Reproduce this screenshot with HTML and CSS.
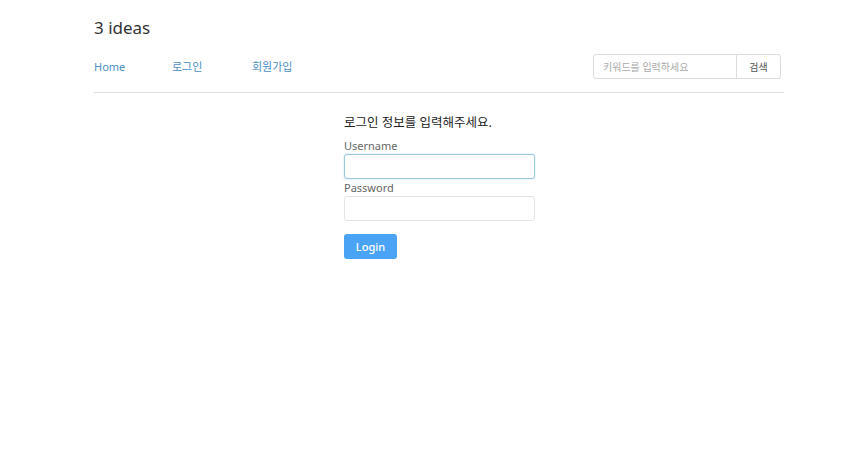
FILE: index.html
```html
<!DOCTYPE html>
<html lang="ko">
<head>
<meta charset="utf-8">
<link rel="stylesheet" href="styles.css">
</head>
<body>
<div class="container">
  <h1 class="brand">3 ideas</h1>
  <nav class="nav">
    <div class="links">
      <a href="#" class="link">Home</a>
      <a href="#" class="link">로그인</a>
      <a href="#" class="link">회원가입</a>
    </div>
    <form class="search">
      <input class="search-input" type="text" placeholder="키워드를 입력하세요">
      <button class="search-btn" type="button">검색</button>
    </form>
  </nav>
  <div class="rule"></div>
  <main class="login">
    <h2 class="login-title">로그인 정보를 입력해주세요.</h2>
    <label class="label first">Username</label>
    <input class="field focused" type="text">
    <label class="label">Password</label>
    <input class="field" type="password">
    <button class="login-btn" type="button">Login</button>
  </main>
</div>
</body>
</html>
```
FILE: styles.css
```css
* { box-sizing: border-box; }
html, body { margin: 0; padding: 0; background: #fff; }
body {
  font-family: "Noto Sans", "Noto Sans CJK KR", sans-serif;
  color: #333;
}
.container {
  width: 690px;
  margin-left: 94px;
  padding-top: 16px;
}
.brand {
  margin: 0;
  font-size: 17px;
  font-weight: 400;
  line-height: 24px;
  color: #333;
}
.nav {
  display: flex;
  justify-content: space-between;
  align-items: center;
  margin-top: 14px;
  padding-right: 3px;
}
.links { display: flex; }
.link {
  font-size: 11px;
  color: #4a8fc4;
  text-decoration: none;
  line-height: 16px;
}
.link:nth-child(1) { width: 78px; }
.link:nth-child(2) { width: 80px; }
.search { display: flex; }
.search-input {
  width: 144px;
  height: 25px;
  border: 1px solid #ddd;
  border-radius: 3px 0 0 3px;
  padding: 0 9px;
  font-family: inherit;
  font-size: 10px;
  outline: none;
}
.search-input::placeholder { color: #aaa; }
.search-btn {
  width: 44px;
  height: 25px;
  border: 1px solid #ddd;
  border-left: none;
  border-radius: 0 3px 3px 0;
  background: #fff;
  font-family: inherit;
  font-size: 10px;
  color: #555;
  padding: 0;
}
.rule {
  height: 1px;
  background: #ddd;
  margin-top: 13px;
}
.login {
  display: flex;
  flex-direction: column;
  align-items: flex-start;
  width: 191px;
  margin-left: 250px;
  padding-top: 21px;
}
.login-title {
  margin: 0;
  font-size: 12.5px;
  font-weight: 400;
  line-height: 18px;
  color: #222;
}
.label {
  font-size: 11px;
  color: #666;
  line-height: 15px;
  margin-top: 1px;
}
.label.first { margin-top: 6px; }
.field {
  width: 191px;
  height: 25px;
  border: 1px solid #e3e3e3;
  border-radius: 3px;
  outline: none;
  margin-top: 1px;
}
.field.focused {
  border-color: #9cc9e0;
  box-shadow: 0 0 2px #b8dcef;
}
.login-btn {
  margin-top: 13px;
  width: 53px;
  height: 25px;
  border: none;
  border-radius: 3px;
  background: #4ba3f5;
  color: #fff;
  font-family: inherit;
  font-size: 11px;
  font-weight: 500;
  padding: 0;
}
```
